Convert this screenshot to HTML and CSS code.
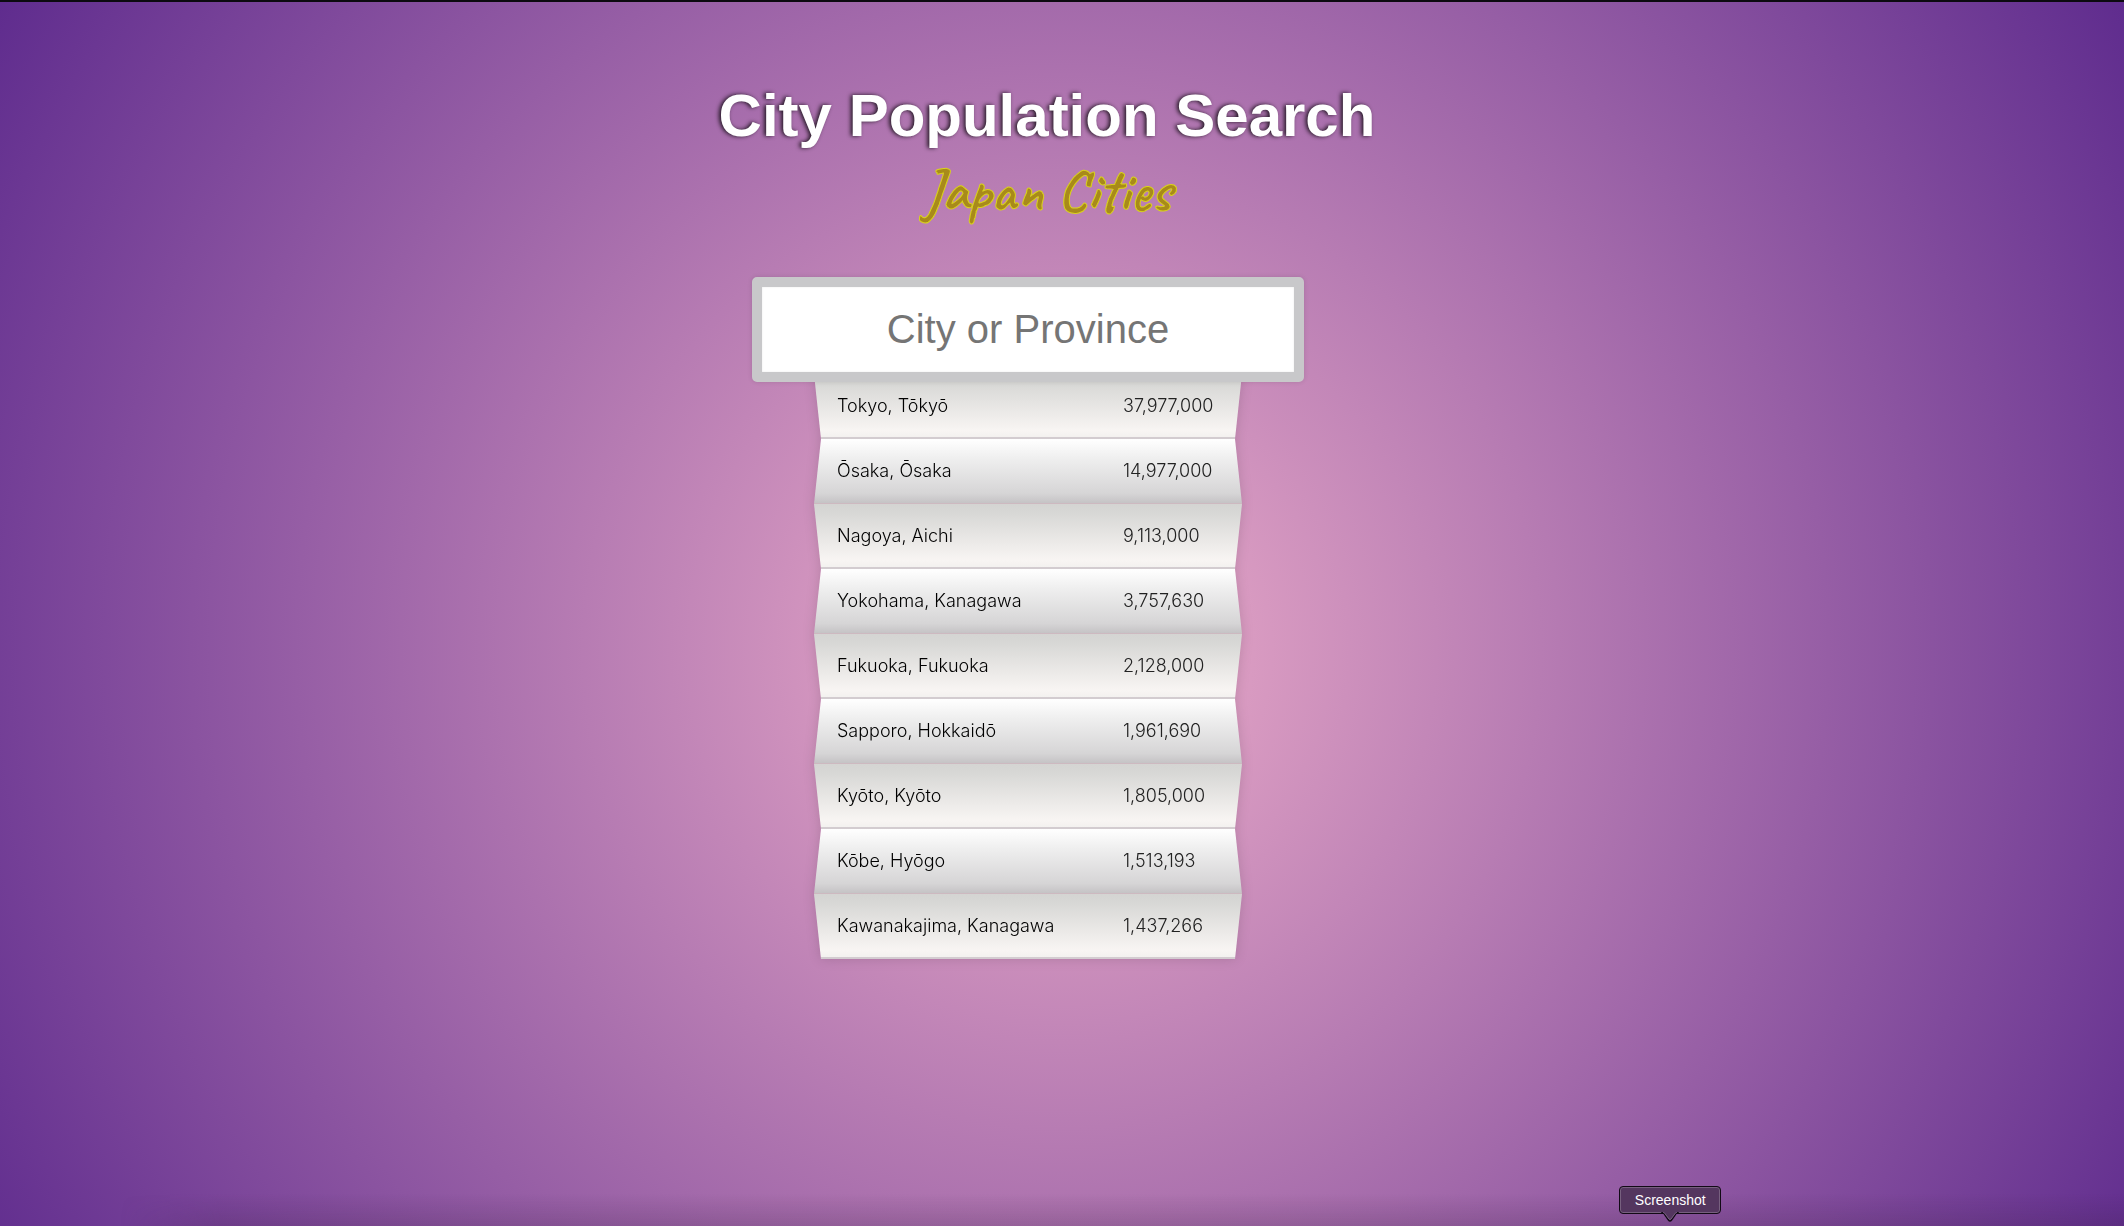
FILE: index.html
```html
<!DOCTYPE html>
<html lang="en">
<head>
<meta charset="utf-8">
<title>City Population Search</title>
<link rel="stylesheet" href="styles.css">
</head>
<body>
<main class="page">
  <header class="heading">
    <h1 class="title">City Population Search</h1>
    <h2 class="subtitle">Japan Cities</h2>
  </header>
  <form class="search-form">
    <input type="text" class="search" placeholder="City or Province" aria-label="City or Province">
    <ul class="suggestions">
      <li><span class="fold"></span><span class="name">Tokyo, Tōkyō</span><span class="population">37,977,000</span></li>
      <li><span class="fold"></span><span class="name">Ōsaka, Ōsaka</span><span class="population">14,977,000</span></li>
      <li><span class="fold"></span><span class="name">Nagoya, Aichi</span><span class="population">9,113,000</span></li>
      <li><span class="fold"></span><span class="name">Yokohama, Kanagawa</span><span class="population">3,757,630</span></li>
      <li><span class="fold"></span><span class="name">Fukuoka, Fukuoka</span><span class="population">2,128,000</span></li>
      <li><span class="fold"></span><span class="name">Sapporo, Hokkaidō</span><span class="population">1,961,690</span></li>
      <li><span class="fold"></span><span class="name">Kyōto, Kyōto</span><span class="population">1,805,000</span></li>
      <li><span class="fold"></span><span class="name">Kōbe, Hyōgo</span><span class="population">1,513,193</span></li>
      <li><span class="fold"></span><span class="name">Kawanakajima, Kanagawa</span><span class="population">1,437,266</span></li>
    </ul>
  </form>
</main>
<div class="tooltip" role="tooltip">Screenshot
  <svg class="tooltip-arrow" width="20" height="11" viewBox="0 0 20 11" aria-hidden="true">
    <path d="M1 0 L2 0 Q4 1 5 3 L8.500 8 Q10 10 11.500 8 L15 3 Q16 1 18 0 L19 0" fill="#54365f" stroke="#120a16" stroke-width="1.500"/>
    <path d="M3 0 Q5 1 6 3 L9 7 Q10 8 11 7 L14 3 Q15 1 17 0" fill="#54365f" stroke="#77607f"/>
  </svg>
</div>
</body>
</html>
```
FILE: styles.css
```css
* {
  box-sizing: border-box;
}

body {
  margin: 0;
  min-height: 100vh;
  position: relative;
  border-top: 2px solid #0c0a10;
  background: radial-gradient(circle at 50% 53%, #eeaeca 0%, #5f2c8e 100%);
  font-family: "Helvetica Neue", "Liberation Sans", Arial, sans-serif;
}

body::after {
  content: "";
  position: absolute;
  left: 120px;
  right: 0;
  bottom: 0;
  height: 32px;
  background: linear-gradient(transparent, rgba(60, 30, 70, 0.2));
  -webkit-mask-image: linear-gradient(90deg, transparent, #000 100px);
  mask-image: linear-gradient(90deg, transparent, #000 100px);
}

.page {
  display: flex;
  flex-direction: column;
  align-items: center;
  padding: 76px 68px 0 0;
}

.heading {
  padding-left: 38px;
  text-align: center;
}

.title {
  margin: 0;
  font-size: 60px;
  line-height: 76px;
  font-weight: 700;
  color: #fff;
  text-shadow: -2px 0 4px rgba(0, 0, 0, 0.8);
}

.subtitle {
  margin: 0;
  font-family: Caveat, "Caveat Brush", Lato, cursive;
  font-size: 60px;
  line-height: 72px;
  font-weight: 700;
  color: #a88a1a;
  -webkit-text-stroke: 1px #d9d21e;
}

.search-form {
  width: 552px;
  max-width: 100%;
  margin-top: 51px;
  display: flex;
  flex-direction: column;
  align-items: center;
}

.search {
  position: relative;
  z-index: 1;
  width: 100%;
  height: 105px;
  padding: 20px;
  border: 10px solid #c8c8ca;
  border-radius: 5px;
  background: #fff;
  box-shadow: 0 0 5px rgba(0, 0, 0, 0.12), inset 0 0 2px rgba(0, 0, 0, 0.1);
  font-family: inherit;
  font-size: 40px;
  text-align: center;
  outline: 0;
}

.search::placeholder {
  color: #757575;
  opacity: 1;
}

.suggestions {
  list-style: none;
  width: 428px;
  margin: -8px 0 0;
  padding: 0;
  filter: drop-shadow(0 0 6px rgba(0, 0, 0, 0.14));
}

.suggestions li {
  position: relative;
  display: flex;
  justify-content: space-between;
  height: 65px;
  padding: 20px 22px 20px 23px;
  line-height: 24px;
}

/* folded paper panel behind each row */
.fold {
  position: absolute;
  inset: 0;
  border-bottom: 2px solid #d3ccd0;
  background: linear-gradient(#d4d4d2 0%, #d8d8d6 15%, #f8f5f3 90%, #f3f1ef 100%);
  clip-path: polygon(0 0, 100% 0, calc(100% - 7px) 100%, 7px 100%);
}

.suggestions li:nth-child(even) .fold {
  border-bottom: 1px solid #cdb9c0;
  background: linear-gradient(#fff 0%, #efefef 30%, #d6d5d6 85%, #c5c3c5 100%);
  clip-path: polygon(7px 0, calc(100% - 7px) 0, 100% 100%, 0 100%);
}

.name,
.population {
  position: relative;
  font-family: Inter, "Helvetica Neue", sans-serif;
  font-size: 18px;
  font-weight: 300;
  color: #000;
}

.population {
  width: 97px;
  color: #222;
}

.tooltip {
  position: absolute;
  left: calc(76% + 5px);
  bottom: 12px;
  z-index: 1;
  width: 102px;
  height: 28px;
  border: 1px solid #120a16;
  border-radius: 4px;
  background: #54365f;
  box-shadow: inset 0 0 0 1px #77607f;
  color: #fff;
  font-family: "Liberation Sans", sans-serif;
  font-size: 14px;
  line-height: 26px;
  text-align: center;
}

.tooltip-arrow {
  position: absolute;
  left: 40px;
  top: 25px;
}
```
